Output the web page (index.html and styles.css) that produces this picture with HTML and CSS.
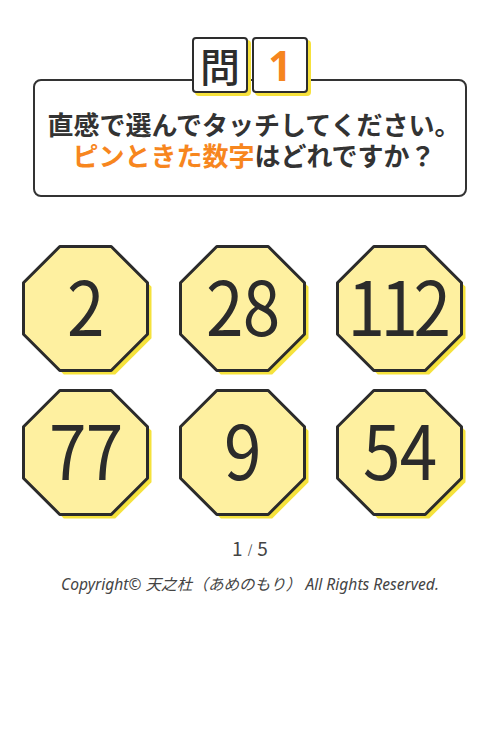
FILE: index.html
```html
<!DOCTYPE html>
<html lang="ja">
<head>
<meta charset="utf-8">
<link rel="stylesheet" href="styles.css">
</head>
<body>
<main class="page">
  <header class="question">
    <div class="badges">
      <span class="badge badge-q">問</span>
      <span class="badge badge-n">1</span>
    </div>
    <div class="qbox">
      <p class="line">直感で選んでタッチしてください。<br><span class="accent">ピンときた数字</span>はどれですか？</p>
    </div>
  </header>

  <section class="grid">
    <button class="oct"><svg class="oct-bg" viewBox="0 0 132 132"><polygon class="sh" points="41.8,5.5 93.2,5.5 129.5,41.8 129.5,93.2 93.2,129.5 41.8,129.5 5.5,93.2 5.5,41.8"/><polygon class="fg" points="37.8,1.5 89.2,1.5 125.5,37.8 125.5,89.2 89.2,125.5 37.8,125.5 1.5,89.2 1.5,37.8"/></svg><span class="num">2</span></button>
    <button class="oct"><svg class="oct-bg" viewBox="0 0 132 132"><polygon class="sh" points="41.8,5.5 93.2,5.5 129.5,41.8 129.5,93.2 93.2,129.5 41.8,129.5 5.5,93.2 5.5,41.8"/><polygon class="fg" points="37.8,1.5 89.2,1.5 125.5,37.8 125.5,89.2 89.2,125.5 37.8,125.5 1.5,89.2 1.5,37.8"/></svg><span class="num">28</span></button>
    <button class="oct"><svg class="oct-bg" viewBox="0 0 132 132"><polygon class="sh" points="41.8,5.5 93.2,5.5 129.5,41.8 129.5,93.2 93.2,129.5 41.8,129.5 5.5,93.2 5.5,41.8"/><polygon class="fg" points="37.8,1.5 89.2,1.5 125.5,37.8 125.5,89.2 89.2,125.5 37.8,125.5 1.5,89.2 1.5,37.8"/></svg><span class="num num-tight">112</span></button>
    <button class="oct"><svg class="oct-bg" viewBox="0 0 132 132"><polygon class="sh" points="41.8,5.5 93.2,5.5 129.5,41.8 129.5,93.2 93.2,129.5 41.8,129.5 5.5,93.2 5.5,41.8"/><polygon class="fg" points="37.8,1.5 89.2,1.5 125.5,37.8 125.5,89.2 89.2,125.5 37.8,125.5 1.5,89.2 1.5,37.8"/></svg><span class="num">77</span></button>
    <button class="oct"><svg class="oct-bg" viewBox="0 0 132 132"><polygon class="sh" points="41.8,5.5 93.2,5.5 129.5,41.8 129.5,93.2 93.2,129.5 41.8,129.5 5.5,93.2 5.5,41.8"/><polygon class="fg" points="37.8,1.5 89.2,1.5 125.5,37.8 125.5,89.2 89.2,125.5 37.8,125.5 1.5,89.2 1.5,37.8"/></svg><span class="num">9</span></button>
    <button class="oct"><svg class="oct-bg" viewBox="0 0 132 132"><polygon class="sh" points="41.8,5.5 93.2,5.5 129.5,41.8 129.5,93.2 93.2,129.5 41.8,129.5 5.5,93.2 5.5,41.8"/><polygon class="fg" points="37.8,1.5 89.2,1.5 125.5,37.8 125.5,89.2 89.2,125.5 37.8,125.5 1.5,89.2 1.5,37.8"/></svg><span class="num">54</span></button>
  </section>

  <footer class="foot">
    <p class="progress">1<span class="slash">/</span>5</p>
    <p class="copy">Copyright© 天之杜（あめのもり） All Rights Reserved.</p>
  </footer>
</main>
</body>
</html>
```

FILE: styles.css
```css
html, body {
  margin: 0;
  padding: 0;
  background: #ffffff;
}

body {
  font-family: "Noto Sans CJK JP", "Noto Sans", sans-serif;
  color: #333333;
}

.page {
  width: 500px;
  padding-top: 37px;
}

.question {
  display: flex;
  flex-direction: column;
  align-items: center;
}

.badges {
  display: flex;
  gap: 4px;
  margin-bottom: -14px;
  position: relative;
  z-index: 1;
}

.badge {
  box-sizing: border-box;
  width: 56px;
  height: 56px;
  display: flex;
  align-items: center;
  justify-content: center;
  background: #ffffff;
  border: 2.5px solid #2d2d2d;
  border-radius: 4px;
  box-shadow: 3px 3px 0 #f6e13c;
  line-height: 1;
}

.badge-q {
  font-size: 40px;
  font-weight: 500;
  color: #2d2d2d;
}

.badge-n {
  font-family: "Noto Sans", "Noto Sans CJK JP", sans-serif;
  font-size: 41px;
  font-weight: 700;
  color: #f5851f;
}

.qbox {
  box-sizing: border-box;
  width: 434px;
  height: 118px;
  border: 2.5px solid #333333;
  border-radius: 8px;
  padding-top: 27px;
  padding-left: 8px;
  text-align: center;
}

.line {
  margin: 0;
  font-size: 26px;
  font-weight: 700;
  line-height: 31px;
  color: #333333;
  white-space: nowrap;
}

.accent {
  color: #f7861e;
}

.grid {
  display: grid;
  grid-template-columns: repeat(3, 131px);
  column-gap: 26px;
  row-gap: 13px;
  margin: 48px 0 0 22px;
}

.oct {
  position: relative;
  width: 131px;
  height: 131px;
  padding: 0 4px 14px 0;
  border: 0;
  background: transparent;
  display: flex;
  align-items: center;
  justify-content: center;
  font-family: "Noto Sans CJK JP", sans-serif;
  cursor: pointer;
}

.oct-bg {
  position: absolute;
  left: 0;
  top: 0;
  width: 132px;
  height: 132px;
}

.sh {
  fill: #f5e23c;
}

.fg {
  fill: #fef0a0;
  stroke: #2b2b2b;
  stroke-width: 3;
  stroke-linejoin: round;
}

.num {
  position: relative;
  font-size: 75px;
  font-weight: 400;
  color: #2b2b2b;
  line-height: 1;
  letter-spacing: -1px;
  transform: scaleX(0.9);
}

.num-tight {
  letter-spacing: -5px;
  margin-left: -5px;
}

.foot {
  text-align: center;
  margin-top: 14px;
}

.progress {
  margin: 0;
  font-family: "Noto Sans CJK JP", sans-serif;
  font-size: 19px;
  line-height: 28px;
  color: #444444;
}

.slash {
  font-size: 12px;
  margin: 0 5px;
  vertical-align: 2px;
}

.copy {
  margin: 10px 0 0;
  font-family: "Noto Sans", "Noto Sans CJK JP", sans-serif;
  font-style: italic;
  font-size: 15.6px;
  line-height: 22px;
  color: #444444;
}
```
